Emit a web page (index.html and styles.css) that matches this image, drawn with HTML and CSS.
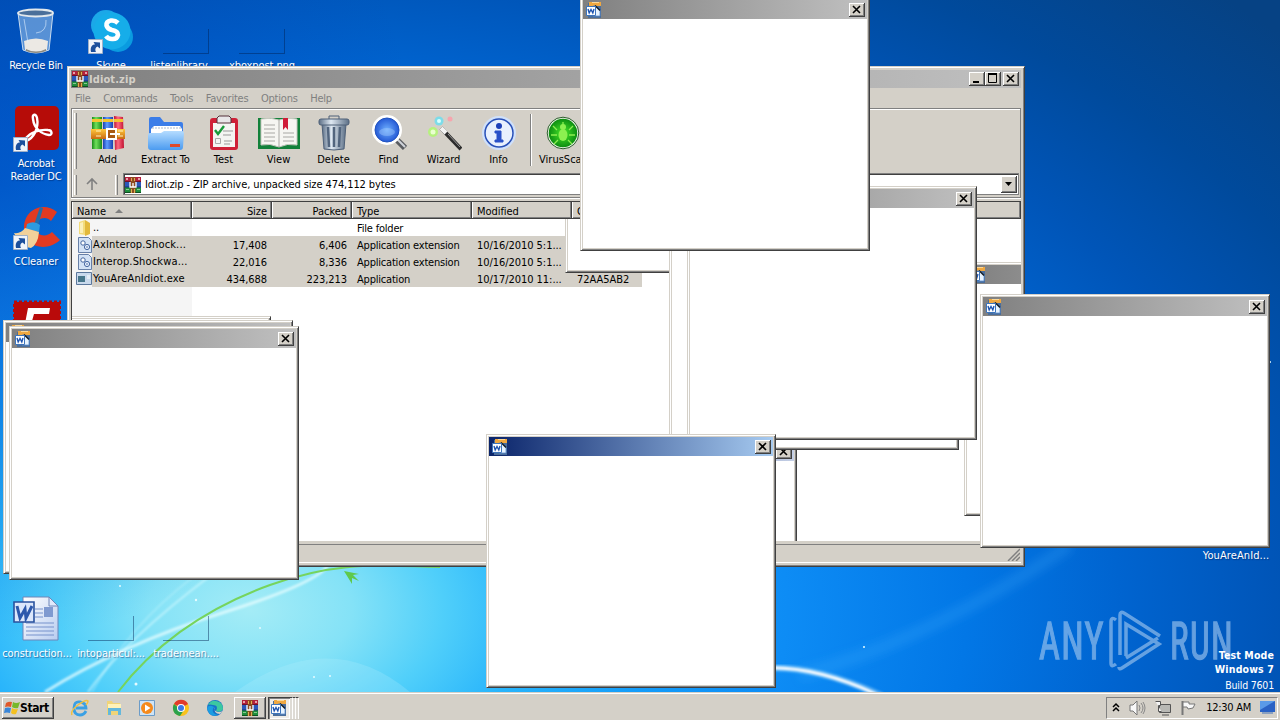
FILE: index.html
```html
<!DOCTYPE html>
<html lang="en">
<head>
  <meta charset="UTF-8">
  <meta name="viewport" content="width=device-width, initial-scale=1.0">
  <title>Desktop</title>
  <link rel="stylesheet" href="styles.css">
</head>
<body>
  <!-- Icon definitions -->
  <svg class="defs" width="0" height="0">
    <defs>
      <linearGradient id="gRed"><stop offset="0" stop-color="#c01030"/><stop offset=".4" stop-color="#ff6a80"/><stop offset="1" stop-color="#c01030"/></linearGradient>
      <linearGradient id="gGreen"><stop offset="0" stop-color="#1a8a1a"/><stop offset=".4" stop-color="#6fe05a"/><stop offset="1" stop-color="#1a8a1a"/></linearGradient>
      <linearGradient id="gBlue"><stop offset="0" stop-color="#1a3fb0"/><stop offset=".4" stop-color="#5d9cff"/><stop offset="1" stop-color="#1a3fb0"/></linearGradient>
      <linearGradient id="gGold" x2="0" y2="1"><stop offset="0" stop-color="#ffc93c"/><stop offset="1" stop-color="#c96a10"/></linearGradient>
      <linearGradient id="gFolder" x2="0" y2="1"><stop offset="0" stop-color="#b5dcff"/><stop offset="1" stop-color="#4b9bf0"/></linearGradient>
      <linearGradient id="gSteel"><stop offset="0" stop-color="#5c6f86"/><stop offset=".4" stop-color="#dfe9f3"/><stop offset="1" stop-color="#5c6f86"/></linearGradient>
      <radialGradient id="gLens"><stop offset="0" stop-color="#6fb0ff"/><stop offset="1" stop-color="#1c4fd0"/></radialGradient>
      <radialGradient id="gVirus"><stop offset="0" stop-color="#4ae82a"/><stop offset="1" stop-color="#0a8a10"/></radialGradient>
      <linearGradient id="gPage" x2="1" y2="1"><stop offset="0" stop-color="#fff"/><stop offset="1" stop-color="#b9cdf0"/></linearGradient>
    </defs>
    <symbol id="rar" viewBox="0 0 16 16">
      <path fill="#b3203c" d="M0 0h16v5H0z"/>
      <path fill="#2b56b8" d="M0 5h16v5H0z"/>
      <path fill="#1f8e3c" d="M0 10h16v6H0z"/>
      <path fill="#701028" d="M0 4h16v1H0z"/><path fill="#14307a" d="M0 9.500h16v1H0z"/><path fill="#0c5020" d="M0 15h16v1H0z"/>
      <path fill="#e8a0a8" d="M1 1h2v2H1zM13 1h2v2h-2z"/><path fill="#8ac890" d="M1 12h3v1H1zM12 12h3v1h-3z"/>
      <path fill="#8c4a20" d="M5.500 0h5v16h-5z"/>
      <path fill="#e0b050" d="M6 1h1v3H6zM9 1h1v3H9zM6 12h1v4H6zM9 12h1v4H9z"/>
      <path fill="none" stroke="#fff" stroke-width="1.300" d="M5 5v5h6V5M8 6v4"/>
    </symbol>
    <symbol id="word" viewBox="0 0 16 16">
      <path fill="#4a6e9c" d="M2 1h13v15H2z"/>
      <path fill="#f0a840" d="M3 0h12v4H3z"/>
      <path fill="#fbd898" d="M6 0h7v1H6z"/>
      <path fill="#e8f4ff" stroke="#5b8ecf" stroke-width=".8" d="M7 4h3l4 4v6H7z"/>
      <path fill="#101820" d="M9.500 3l5 5-1 1-5-5z"/>
      <path fill="#fff" stroke="#3d75bc" d="M.5 4.500h9v9h-9z"/>
      <path fill="none" stroke="#1f55b0" stroke-width="1.400" d="M2 7l1.200 4L5 7.500 6.800 11 8 7"/>
    </symbol>
    <symbol id="shortcut" viewBox="0 0 15 15">
      <path fill="#f0f4fa" stroke="#9fb0c8" d="M.5.5h14v14H.5z"/>
      <path fill="#1c4f9c" d="M3 13C2 8 4 5.500 7 5.500L5.500 3 12 3.500 12 9.500 9.500 7.500C7 8.500 7 11 8 13z"/>
    </symbol>
    <symbol id="close" viewBox="0 0 16 14">
      <path fill="none" stroke="#000" stroke-width="1.600" d="M4 3l7 7M11 3l-7 7"/>
    </symbol>
    <symbol id="dll" viewBox="0 0 14 16">
      <path fill="#d3e2f5" stroke="#6780a8" d="M.5.5h10l3 3v12H.5z"/>
      <circle cx="5" cy="6" r="2.200" fill="#fff" stroke="#43659f"/><circle cx="9" cy="10" r="2.600" fill="#e8f0fc" stroke="#43659f"/><circle cx="9" cy="10" r=".8" fill="#43659f"/>
    </symbol>
  </svg>

  <div class="desktop">
    <svg class="wallpaper" width="1280" height="692" viewBox="0 0 1280 692">
      <defs>
        <filter id="soft"><feGaussianBlur stdDeviation="1.200"/></filter>
        <filter id="softer"><feGaussianBlur stdDeviation="5"/></filter>
      </defs>
      <path d="M800 675Q930 640 1070 545" fill="none" stroke="#49b5ff" stroke-opacity=".22" stroke-width="12" filter="url(#softer)"/>
      <path d="M235 692Q330 625 410 692z" fill="#bdf3ff" fill-opacity=".22"/>
      <path d="M45 692Q120 645 225 612T330 560" fill="none" stroke="#e8fdff" stroke-opacity=".75" stroke-width="3" filter="url(#soft)"/>
      <path d="M88 692Q125 640 210 576" fill="none" stroke="#d8fbff" stroke-opacity=".6" stroke-width="2" filter="url(#soft)"/>
      <path d="M92 692Q130 625 192 578" fill="none" stroke="#d8fbff" stroke-opacity=".4" stroke-width="1.500" filter="url(#soft)"/>
      <path d="M118 692C150 650 200 610 270 585S380 566 440 567" fill="none" stroke="#76d45c" stroke-width="2"/>
      <path d="M344 571l15 3-6 1 6 6-7-3v6z" fill="#5fc94c"/>
      <path d="M765 668Q815 665 882 696" fill="none" stroke="#bfeaff" stroke-width="7" filter="url(#soft)" opacity=".4"/>
      <path d="M765 668Q815 666 876 694" fill="none" stroke="#fff" stroke-width="3" filter="url(#soft)"/>
      <g fill="#e6fbff"><circle cx="120" cy="586" r="1"/><circle cx="196" cy="600" r="1.200"/><circle cx="260" cy="628" r="1"/><circle cx="136" cy="684" r="1.500"/><circle cx="314" cy="677" r="1"/><circle cx="330" cy="676" r="1"/><circle cx="864" cy="647" r="1"/><circle cx="1270" cy="362" r="1"/></g>
    </svg>

    <!-- Desktop icons -->
    <div class="icon recycle">
      <svg width="44" height="48" viewBox="0 0 44 48">
        <path d="M4 6l5 37q13 6 26 0l4-37z" fill="#9fc4ea" fill-opacity=".55" stroke="#c9dcef"/>
        <path d="M10 34q12-5 24 0l-1 9q-11 5-22 0z" fill="#ece9e4"/>
        <path d="M12 42q10 5 20 0v2q-10 4-20 0z" fill="#8d8a80"/>
        <ellipse cx="21.500" cy="6" rx="17.500" ry="3.500" fill="#4a6f9a" stroke="#e2e8ec" stroke-width="1.800"/>
        <path d="M10 12l4 24M32 13q1 12-10 13" fill="none" stroke="#e4f2ff" stroke-opacity=".6"/>
      </svg>
      <span>Recycle Bin</span>
    </div>
    <div class="icon skype">
      <svg width="48" height="48" viewBox="0 0 48 48">
        <circle cx="19" cy="17" r="15" fill="#1ba8e8"/><circle cx="31" cy="29" r="15" fill="#0a9be0"/><circle cx="25" cy="23" r="18.500" fill="#16ade9"/>
        <path d="M31 15q-3-3-7-2.500-5 1-4.500 5 1 3.500 5.500 4.500 6 1 6 5-1 4.500-6 4-4 0-6-3" fill="none" stroke="#fff" stroke-width="4.600"/>
        <use href="#shortcut" x="1" y="31" width="15" height="15"/>
      </svg>
      <span>Skype</span>
    </div>
    <div class="icon listen"><i class="blank"></i><span>listenlibrary</span></div>
    <div class="icon xbox"><i class="blank"></i><span>xboxpost.png</span></div>
    <div class="icon acrobat">
      <svg width="48" height="48" viewBox="0 0 48 48">
        <rect x="3" y="1" width="44" height="44" rx="5" fill="#b60c08"/>
        <path d="M14 36c8-3 13-13 11-23-1-5-5-4-4 1 1 9 8 15 16 16 4 0 3-5-1-5-9-1-18 3-22 8-2 3-2 4 0 3z" fill="none" stroke="#fff" stroke-width="2.400"/>
        <use href="#shortcut" x="1" y="32" width="15" height="15"/>
      </svg>
      <span>Acrobat Reader DC</span>
    </div>
    <div class="icon ccleaner">
      <svg width="48" height="48" viewBox="0 0 48 48">
        <path d="M45 8C32-3 12 5 12 24s22 25 36 12l-8-8c-6 6-16 4-16-5s10-12 15-6z" fill="#e23a22"/>
        <path d="M28 3l3 1-5 18-4-1z" fill="#256da8"/><path d="M15 20q7-4 13 1l-1 7-13-3z" fill="#2d9be0"/>
        <path d="M13 24l14 4q-1 12-8 16Q8 43 2 29q7 1 11-5z" fill="#f2d19a"/>
        <use href="#shortcut" x="1" y="31" width="15" height="15"/>
      </svg>
      <span>CCleaner</span>
    </div>
    <div class="icon filezilla">
      <svg width="48" height="48" viewBox="0 0 48 48">
        <rect x="1" y="2" width="46" height="44" fill="#b90a0a" stroke="#b90a0a" stroke-width="3" stroke-dasharray="3 2"/>
        <path d="M15 8h22l-1 6H21l-2 7h12l-2 6H18l-3 12H9z" fill="#fff"/>
      </svg>
    </div>
    <div class="icon construction">
      <svg width="48" height="48" viewBox="0 0 48 48">
        <path d="M10 1h26l9 9v34H10z" fill="url(#gPage)" stroke="#6e86b8"/>
        <path d="M36 1v9h9z" fill="#dfe9fb" stroke="#6e86b8"/>
        <path d="M22 13h8M22 17h8M22 21h8M13 27h28M13 31h28M13 35h28M13 39h28" stroke="#7792cc"/>
        <path d="M31 11h9v10h-9z" fill="#7f9ad0"/>
        <path d="M1 6h20v20H1z" fill="#dce7fb" stroke="#28529e" stroke-width="1.600"/>
        <path d="M4 10l3 12 5-9 1 9 6-12" fill="none" stroke="#2c58ac" stroke-width="3"/>
      </svg>
      <span>construction...</span>
    </div>
    <div class="icon particular"><i class="blank"></i><span>intoparticul:...</span></div>
    <div class="icon trade"><i class="blank"></i><span>trademean....</span></div>
    <div class="icon idiot"><span>YouAreAnId...</span></div>

    <!-- Watermark -->
    <svg class="anyrun" width="200" height="66" viewBox="0 0 200 66">
      <text x="1" y="49" font-size="52" textLength="66" lengthAdjust="spacingAndGlyphs">ANY</text>
      <text x="132" y="49" font-size="52" textLength="64" lengthAdjust="spacingAndGlyphs">RUN</text>
      <path d="M78 10q-5-4-5 2v41q0 5 5 1M82 45V5q0-4 4-2l36 23M88 46V14l33 20-37 24q-3 2-3-1M88 48l32-20" fill="none" stroke-width="3.500"/>
    </svg>
    <div class="build"><b>Test Mode</b><b>Windows 7</b><span>Build 7601</span></div>

    <!-- WinRAR window -->
    <div class="window main">
      <div class="titlebar">
        <svg width="16" height="16"><use href="#rar"/></svg>
        <span class="caption">Idiot.zip</span>
        <div class="btn"><svg width="16" height="14"><path d="M4 9h6v2H4z"/></svg></div>
        <div class="btn"><svg width="16" height="14"><path d="M3.500 2v8.500h8V2z" fill="none" stroke="#000"/><path d="M3 1h9v2H3z"/></svg></div>
        <div class="btn last"><svg width="16" height="14"><use href="#close"/></svg></div>
      </div>
      <div class="menubar"><span>File</span><span>Commands</span><span>Tools</span><span>Favorites</span><span>Options</span><span>Help</span></div>
      <div class="rebar">
        <div class="toolbar">
          <i class="grip"></i>
          <div class="tool">
            <svg width="36" height="36" viewBox="0 0 36 36">
              <path fill="url(#gGreen)" d="M2 2h10v32H2z"/><path fill="url(#gBlue)" d="M13 2h10v32H13z"/><path fill="url(#gRed)" d="M24 1l9 1 1 31-9 2z"/>
              <path fill="#f4c430" d="M2 4h10v3H2zM13 4h10v3H13zM24 4h9v3h-9z"/>
              <path fill="url(#gGold)" d="M1 14h34v10H1z"/><path d="M6 16h5M6 21h5M28 16h5M28 21h5" stroke="#fff3c0"/>
              <path d="M17 14h9v10h-9z" fill="#a85a14" stroke="#fff" stroke-width="2"/><path d="M20 19h10" stroke="#fff" stroke-width="2"/>
            </svg>
            <span>Add</span>
          </div>
          <div class="tool wide">
            <svg width="36" height="36" viewBox="0 0 36 36">
              <path fill="#3b7de8" d="M1 4q0-2 2-2h9l4 5h17q2 0 2 2v14H1z"/>
              <path d="M3 14l3-3h26l2 3v6H3z" fill="#fff"/><path d="M4 13h30" stroke="#a9b9d0" stroke-dasharray="2 1"/>
              <path fill="url(#gFolder)" d="M0 20q0-2 2-2h11l3-2h18q2 0 2 2l-1 14q0 3-3 3H3q-3 0-3-3z"/>
              <path fill="#e04a2a" d="M22 29h10v3H22z"/>
            </svg>
            <span>Extract To</span>
          </div>
          <div class="tool">
            <svg width="36" height="36" viewBox="0 0 36 36">
              <rect x="4" y="3" width="28" height="32" rx="3" fill="#cf2038"/><path d="M7 8h22v24H7z" fill="#f4f4f2"/>
              <path d="M11 3l2-2h10l2 2v5H11z" fill="#e8e6e8" stroke="#55303a"/>
              <path d="M9 15l3 4 6-8" fill="none" stroke="#189a3a" stroke-width="2.400"/>
              <path d="M17 16h10M17 20h8M18 26h8M18 29h6" stroke="#999"/><path d="M9.500 23.500h5v5h-5z" fill="none" stroke="#aaa"/>
            </svg>
            <span>Test</span>
          </div>
          <div class="tool">
            <svg width="44" height="36" viewBox="0 0 44 36">
              <path fill="#12813a" d="M1 3h42v31H1z"/><path fill="#f6f6f2" stroke="#c8c8c0" d="M4 4q10-2 18 1 9-3 18-1v26q-10-2-18 2-9-4-18-2z"/>
              <path d="M22 5v27M7 10h11M7 14h11M7 18h11M7 22h11M7 26h11M26 18h11M26 22h11M26 26h11" stroke="#a8a8a4"/>
              <path fill="#d01c38" d="M26 3h5v12l-2.500-3-2.500 3z"/>
            </svg>
            <span>View</span>
          </div>
          <div class="tool">
            <svg width="36" height="36" viewBox="0 0 36 36">
              <path fill="url(#gSteel)" stroke="#4e6078" d="M6 9h24l-2 25q-10 2-20 0z"/>
              <path d="M12 12l1 20M18 12v20M24 12l-1 20" stroke="#52657e" stroke-width="2.500"/>
              <rect x="3" y="4" width="30" height="6" rx="2" fill="url(#gSteel)" stroke="#4e6078"/><path d="M13 4V1h10v3" fill="none" stroke="#4e6078"/>
            </svg>
            <span>Delete</span>
          </div>
          <div class="tool">
            <svg width="36" height="36" viewBox="0 0 36 36">
              <path d="M25 24l9 9" stroke="#5a5c60" stroke-width="6"/><path d="M25 23l9 9" stroke="#d0d4da" stroke-width="2"/>
              <circle cx="16" cy="15" r="13.500" fill="url(#gLens)" stroke="#fff" stroke-width="3"/><circle cx="16" cy="15" r="12" fill="none" stroke="#2254c0"/>
              <ellipse cx="16" cy="17" rx="8" ry="4" fill="#a9d0ff" opacity=".4"/>
            </svg>
            <span>Find</span>
          </div>
          <div class="tool">
            <svg width="36" height="36" viewBox="0 0 36 36">
              <path d="M15 13l20 21" stroke="#2c2c2c" stroke-width="4"/><path d="M15 13l5 5" stroke="#f2f2f2" stroke-width="4"/><path d="M22 19l12 13" stroke="#999"/>
              <circle cx="7" cy="17" r="5" fill="#aaff60" opacity=".7"/><circle cx="7" cy="17" r="2.500" fill="#eaffd0"/>
              <circle cx="13" cy="6" r="4.500" fill="#60e0f4" opacity=".75"/><circle cx="13" cy="6" r="2" fill="#d8ffff"/><circle cx="24" cy="4" r="2.500" fill="#ff9aa8" opacity=".8"/>
            </svg>
            <span>Wizard</span>
          </div>
          <div class="tool">
            <svg width="36" height="36" viewBox="0 0 36 36">
              <circle cx="18" cy="18" r="17" fill="#cfe0fa"/><circle cx="18" cy="18" r="14" fill="#e8f0fd" stroke="#2850b8" stroke-width="1.500"/>
              <circle cx="18" cy="11" r="3" fill="#1c3fb8"/><path d="M14 16h6v9h2v2h-8v-2h2v-7h-2z" fill="#2850c8" stroke="#2850c8"/>
            </svg>
            <span>Info</span>
          </div>
          <i class="sep"></i>
          <div class="tool">
            <svg width="36" height="36" viewBox="0 0 36 36">
              <circle cx="17" cy="18" r="15" fill="url(#gVirus)" stroke="#eaf5e6" stroke-width="1.500"/><circle cx="17" cy="18" r="15.800" fill="none" stroke="#2e5c2e"/>
              <ellipse cx="17" cy="20" rx="4.500" ry="6" fill="#8cf050"/><path d="M17 12V7M11 15l-4-4M23 15l4-4M11 20H5M23 20h6M12 25l-4 4M22 25l4 4" stroke="#8cf050" stroke-width="1.300"/><circle cx="17" cy="12" r="3" fill="#8cf050"/>
            </svg>
            <span>VirusScan</span>
          </div>
        </div>
        <div class="address">
          <i class="grip"></i>
          <svg class="up" width="14" height="14" viewBox="0 0 14 14"><path d="M7 13V3M2 7l5-5 5 5" fill="none" stroke="#808080" stroke-width="1.600"/></svg>
          <i class="grip second"></i>
          <div class="combo">
            <svg width="16" height="16"><use href="#rar"/></svg>
            <span>Idiot.zip - ZIP archive, unpacked size 474,112 bytes</span>
            <div class="drop"><svg width="15" height="15"><path d="M4 6h7l-3.500 4z"/></svg></div>
          </div>
        </div>
      </div>
      <div class="list">
        <div class="row header">
          <span>Name <svg class="arrow" width="8" height="4"><path d="M4 0l4 4H0z"/></svg></span><span class="num">Size</span><span class="num">Packed</span><span>Type</span><span>Modified</span><span>CRC32</span><span></span>
        </div>
        <div class="files">
          <div class="row">
            <span><svg width="14" height="16" viewBox="0 0 14 16"><path fill="#f3dc7c" d="M1 2l6-2v15l-6-1z"/><path fill="#e2b93c" d="M7 0l5 3v11l-5 2z"/><path fill="#fbf0ba" d="M2 3l3-1v11H2z"/></svg>..</span><span></span><span></span><span>File folder</span>
          </div>
          <div class="row selected">
            <span><svg width="14" height="16"><use href="#dll"/></svg><b>AxInterop.Shock...</b></span><span class="num">17,408</span><span class="num">6,406</span><span>Application extension</span><span>10/16/2010 5:1...</span><span></span>
          </div>
          <div class="row selected">
            <span><svg width="14" height="16"><use href="#dll"/></svg><b>Interop.Shockwa...</b></span><span class="num">22,016</span><span class="num">8,336</span><span>Application extension</span><span>10/16/2010 5:1...</span><span></span>
          </div>
          <div class="row selected">
            <span><svg width="16" height="14" viewBox="0 0 16 14"><path d="M.5.500h15v12H.5z" fill="#c9d9ec" stroke="#5b779c"/><path d="M2 4h7v6H2z" fill="#47768a"/><path d="M11 4h3M11 6h3" stroke="#fff"/></svg><b>YouAreAnIdiot.exe</b></span><span class="num">434,688</span><span class="num">223,213</span><span>Application</span><span>10/17/2010 11:...</span><span>72AA5AB2</span>
          </div>
          <!-- Popups painted over the list only -->
          <div class="window popup p-edge"></div>
          <div class="window popup p-upper"></div>
          <div class="window popup p-lower">
            <div class="titlebar faded"><svg width="16" height="16"><use href="#word"/></svg><div class="btn last"><svg width="16" height="14"><use href="#close"/></svg></div></div>
          </div>
          <div class="window popup p-right">
            <div class="titlebar"><svg width="16" height="16"><use href="#word"/></svg></div>
          </div>
          <div class="window popup p-middle"></div>
        </div>
      </div>
      <div class="statusbar">
        <svg width="13" height="13"><path d="M1 13L13 1M5 13l8-8M9 13l4-4" stroke="#808080" stroke-width="1.500"/></svg>
      </div>
    </div>

    <!-- Popup windows -->
    <div class="window popup w1"><div class="titlebar"><svg width="16" height="16"><use href="#word"/></svg><div class="btn last"><svg width="16" height="14"><use href="#close"/></svg></div></div></div>
    <div class="window popup w2"><div class="titlebar"><svg width="16" height="16"><use href="#word"/></svg><div class="btn last"><svg width="16" height="14"><use href="#close"/></svg></div></div></div>
    <div class="window popup w3"><div class="titlebar"><svg width="16" height="16"><use href="#word"/></svg><div class="btn last"><svg width="16" height="14"><use href="#close"/></svg></div></div></div>
    <div class="window popup w4"><div class="titlebar"><svg width="16" height="16"><use href="#word"/></svg><div class="btn last"><svg width="16" height="14"><use href="#close"/></svg></div></div></div>
    <div class="window popup w5"><div class="titlebar"><svg width="16" height="16"><use href="#word"/></svg><div class="btn last"><svg width="16" height="14"><use href="#close"/></svg></div></div></div>
    <div class="window popup w6"><div class="titlebar active"><svg width="16" height="16"><use href="#word"/></svg><div class="btn last"><svg width="16" height="14"><use href="#close"/></svg></div></div></div>
  </div>

  <!-- Taskbar -->
  <div class="taskbar">
    <div class="start">
      <svg width="16" height="16" viewBox="0 0 16 16"><path d="M2 3q3-2 6-1L7 7Q4 6 1 7z" fill="#e0582a"/><path d="M9 2q3 2 7 0l-2 6q-3 1-6-1z" fill="#76b82c"/><path d="M1 8q3-1 6 0l-1 5q-3-1-6 0z" fill="#3a86d8"/><path d="M8 8q3 2 6 1l-2 5q-3 1-5-1z" fill="#f4c020"/></svg>
      <span>Start</span>
    </div>
    <div class="quick">
      <svg width="18" height="18" viewBox="0 0 18 18"><path d="M15 12q-2 4-6 4-6 0-6-7t6-6 6 6H5" fill="none" stroke="#3aa0e4" stroke-width="2.800"/><path d="M1 16Q-1 12 7 6t10-4q0 2-2 4" fill="none" stroke="#f0c040" stroke-width="1.500"/></svg>
      <svg width="18" height="18" viewBox="0 0 18 18"><path d="M2 2h5l1 2h7v12H2z" fill="#f0d478"/><path d="M3 5h13v4H3z" fill="#fff2b8"/><path d="M3 9h13v7h-3v-4H6v4H3z" fill="#64b8dc"/></svg>
      <svg width="18" height="18" viewBox="0 0 18 18"><path d="M1.500 1.500h15v15h-15z" fill="#cfe4f6" stroke="#6c9cc8"/><circle cx="9" cy="9" r="6" fill="#f58a1c"/><path d="M7 5.500l5.500 3.500L7 12.500z" fill="#fff"/></svg>
      <svg width="18" height="18" viewBox="0 0 18 18"><circle cx="9" cy="9" r="8" fill="#f9c21c"/><path d="M9 9L2 5a8 8 0 0 1 14 0z" fill="#e03a2c"/><path d="M2 5a8 8 0 0 0 6 12l4-6-4-1z" fill="#2ba24c"/><circle cx="9" cy="9" r="4" fill="#fff"/><circle cx="9" cy="9" r="3" fill="#3b78e7"/></svg>
      <svg width="18" height="18" viewBox="0 0 18 18"><circle cx="9" cy="9" r="8" fill="#1672c8"/><path d="M2 6a8 8 0 0 1 15 4q-2 4-7 2 3-6-3-6-3-1-5 0z" fill="#3cc8a0"/><path d="M8 8q-4 6 4 8-9 3-11-7 2-4 7-1z" fill="#1b9de2"/><path d="M9 8q-2 4 3 5 3 0 5-1l-3 3q-7 0-5-7z" fill="#d4d0c8"/></svg>
    </div>
    <div class="task"><svg width="16" height="16"><use href="#rar"/></svg></div>
    <div class="task pressed"><svg width="16" height="16"><use href="#word"/></svg></div>
    <i class="sliver"></i><i class="sliver"></i><i class="sliver"></i>
    <div class="tray">
      <svg width="8" height="12" viewBox="0 0 8 12"><path d="M1 5l3-3 3 3M1 9l3-3 3 3" fill="none" stroke="#000" stroke-width="1.500"/></svg>
      <svg width="17" height="16" viewBox="0 0 17 16"><path d="M1 5h3l4-4v14l-4-4H1z" fill="#f8f8f8" stroke="#777"/><path d="M10 5q2 3 0 6M12 3q4 5 0 10M14 2q4 6 0 12" fill="none" stroke="#888"/></svg>
      <svg width="16" height="16" viewBox="0 0 16 16"><path d="M4.500 4.500h11v8h-11zM7 15h7" fill="#b8b8b4" stroke="#555"/><path d="M.5 1.500h5v4h-2v6h3" fill="#f4f4f4" stroke="#555"/></svg>
      <svg width="17" height="16" viewBox="0 0 17 16"><path d="M2.500 1v14" stroke="#777" stroke-width="2"/><path d="M3 2h6v2h6l-2 4-5 1-1-2H3z" fill="#f8f8f8" stroke="#777"/></svg>
      <span>12:30 AM</span>
      <svg width="15" height="13" viewBox="0 0 15 13"><path d="M0 0h15v11H0z" fill="#2a62c4"/><path d="M0 0h15L0 9z" fill="#5a9ae8"/><path d="M2 11h11v2H2z" fill="#8aa0c0"/></svg>
    </div>
  </div>
</body>
</html>
```
FILE: styles.css
```css
* { box-sizing: border-box; }
body { margin: 0; width: 1280px; height: 720px; overflow: hidden; display: flex; flex-direction: column; font-family: "DejaVu Sans Condensed", "DejaVu Sans", sans-serif; font-stretch: condensed; font-size: 11px; color: #000; }
b { font-weight: normal; }
svg { display: block; flex: none; }
.defs { position: absolute; }

/* Desktop */
.desktop { position: relative; height: 692px; overflow: hidden; background:
  radial-gradient(ellipse 420px 460px at 0 180px, rgba(0, 60, 175, 0.5), rgba(0, 80, 200, 0)),
  radial-gradient(ellipse 1280px 800px at 250px 610px, #a4ecf6 0, #84e2f7 8%, #50cffa 15%, #28b4fb 22%, #149cf9 32%, #0d8cf5 42%, #0277e6 56%, #0064d0 68%, #0055b8 80%, #004a9c 93%, #064284 108%); }
.wallpaper { position: absolute; left: 0; top: 0; }
.icon { position: absolute; width: 74px; display: flex; flex-direction: column; align-items: center; color: #fff; text-align: center; line-height: 13px; letter-spacing: -0.1px; text-shadow: 1px 1px 1px rgba(0, 30, 90, 0.5); }
.icon span { white-space: nowrap; }
.blank { width: 46px; height: 25px; border-right: 1px solid rgba(0, 30, 80, 0.45); border-bottom: 1px solid rgba(0, 30, 80, 0.45); }
.recycle { left: -1px; top: 7px; letter-spacing: -0.3px; }
.recycle svg { margin-bottom: 4px; }
.skype { left: 74px; top: 8px; }
.skype svg { margin-bottom: 3px; }
.listen { left: 149px; top: 29px; }
.listen span { margin-right: 14px; }
.xbox { left: 225px; top: 29px; }
.listen span, .xbox span { margin-top: 5px; }
.acrobat { left: -1px; top: 105px; letter-spacing: -0.2px; }
.acrobat svg { margin-bottom: 4px; }
.acrobat span { width: 60px; white-space: normal; }
.ccleaner { left: -1px; top: 204px; }
.ccleaner svg { margin-bottom: 3px; }
.filezilla { left: 0; top: 300px; }
.construction { left: 0; top: 596px; }
.construction svg { margin-bottom: 3px; }
.particular { left: 74px; top: 616px; }
.trade { left: 149px; top: 616px; }
.particular span, .trade span { margin-top: 6px; }
.idiot { left: 1199px; top: 549px; letter-spacing: 0.1px; }
.anyrun { position: absolute; left: 1038px; top: 610px; font-family: Roboto, sans-serif; letter-spacing: 2px; fill: #9cc4ee; stroke: #9cc4ee; stroke-width: 1.3px; opacity: 0.65; }
.anyrun path { fill: none; }
.build { position: absolute; right: 6px; top: 648px; display: flex; flex-direction: column; align-items: flex-end; color: #fff; font-size: 10.5px; line-height: 14px; letter-spacing: 0.15px; }
.build b { font-weight: bold; }
.build span { margin-top: 2px; letter-spacing: -0.2px; }

/* Windows */
.window { position: absolute; background: #d4d0c8; border: 1px solid; border-color: #d4d0c8 #404040 #404040 #d4d0c8; box-shadow: inset 1px 1px #fff, inset -1px -1px #808080; }
.titlebar { height: 18px; padding: 0 2px 0 1px; display: flex; align-items: center; background: linear-gradient(90deg, #808080, #c0c0c0); }
.titlebar .caption { margin-left: 1px; flex: 1; color: #d4d0c8; font-weight: bold; font-size: 11px; letter-spacing: 0.1px; }
.btn { width: 16px; height: 14px; background: #d4d0c8; box-shadow: inset -1px -1px #404040, inset 1px 1px #fff, inset -2px -2px #808080; }
.last { margin-left: 2px; }

.main { left: 67px; top: 66px; width: 958px; height: 501px; padding: 3px; display: flex; flex-direction: column; }
.menubar { height: 20px; flex: none; padding-left: 4px; display: flex; align-items: center; gap: 12.6px; color: #808080; letter-spacing: -0.22px; }
.rebar { height: 90px; flex: none; border: 1px solid #808080; box-shadow: inset 1px 1px #fff, 0 1px #fff; }
.toolbar { height: 64px; display: flex; padding-left: 2px; }
.grip { width: 3px; height: 56px; margin-top: 4px; border-left: 1px solid #fff; border-right: 1px solid #808080; flex: none; }
.tool { width: 55px; display: flex; flex-direction: column; align-items: center; padding-top: 6px; }
.tool span { margin-top: 2px; line-height: 13px; }
.tool:nth-child(2) { margin-left: 3px; }
.tool.wide { width: 61px; }
.sep { width: 2px; height: 52px; margin: 5px 4px 0 4px; border-left: 1px solid #808080; border-right: 1px solid #fff; }
.address { height: 24px; display: flex; padding: 0 1px 1px 2px; }
.address .grip { height: 20px; margin-top: 2px; }
.up { margin: 4px 0 0 8px; }
.address .second { margin: 2px 5px 0 16px; }
.combo { flex: 1; height: 22px; background: #fff; border: 1px solid #808080; box-shadow: inset 1px 1px #404040; display: flex; align-items: center; padding: 2px 1px 1px; }
.combo span { flex: 1; margin-left: 4px; letter-spacing: -0.09px; }
.drop { width: 16px; height: 17px; background: #d4d0c8; box-shadow: inset -1px -1px #404040, inset 1px 1px #fff, inset -2px -2px #808080; }
.list { margin-top: 3px; height: 340px; border-top: 1px solid #404040; border-left: 1px solid #404040; background: #fff; }
.row { display: grid; grid-template-columns: 120px 80px 80px 120px 100px 70px 1fr; height: 17px; line-height: 19px; letter-spacing: -0.05px; }
.row span { height: 17px; padding: 0 5px; white-space: nowrap; }
.row .num { text-align: right; }
.header { background: #d4d0c8; }
.header span { box-shadow: inset -1px -1px #404040, inset 1px 0 #fff, inset -2px -2px #808080; }
.arrow { display: inline-block; margin: 0 0 2px 6px; fill: #808080; }
.files { position: relative; height: 322px; overflow: hidden; background: linear-gradient(90deg, #f5f5f5 120px, #fff 120px); }
.files .row span:nth-child(4) { letter-spacing: -0.2px; }
.files .row span:first-child { display: flex; align-items: center; padding: 0; padding-left: 6px; }
.files .row span:first-child svg { margin-right: 1px; }
.files .row:nth-child(4) span:first-child { padding-left: 4px; }
.files b { flex: 1; letter-spacing: 0.15px; }
.selected { width: 570px; background: linear-gradient(90deg, transparent 20px, #d4d0c8 20px); }
.statusbar { flex: 1; margin-top: 3px; border-top: 1px solid #808080; border-bottom: 1px solid #fff; display: flex; justify-content: flex-end; align-items: flex-end; padding: 1px; }

.popup { width: 290px; height: 254px; padding: 2px; background: linear-gradient(#fff, #fff) content-box, #d4d0c8; }
.popup .titlebar { height: 19px; padding: 0 2px 0 3px; justify-content: space-between; }
.popup .active { background: linear-gradient(90deg, #0a246a, #a6caf0); }
.popup .faded { background: linear-gradient(90deg, #0a246a, #c4cfe6); }
.p-edge { left: -91px; top: 97px; }
.p-upper { left: 493px; top: -200px; }
.p-middle { left: 597px; top: -23px; }
.p-lower { left: 435px; top: 220px; }
.p-right { left: 892px; top: 43px; }
.w1 { left: 687px; top: 186px; }
.w2 { left: 580px; top: -3px; }
.w3 { left: 980px; top: 294px; }
.w4 { left: 3px; top: 320px; }
.w5 { left: 9px; top: 326px; }
.w6 { left: 486px; top: 434px; }

/* Taskbar */
.taskbar { height: 28px; background: #d4d0c8; border-top: 1px solid #d4d0c8; box-shadow: inset 0 1px #fff; display: flex; align-items: center; padding: 3px 2px 1px; }
.start, .task { height: 22px; display: flex; align-items: center; box-shadow: inset -1px -1px #404040, inset 1px 1px #fff, inset -2px -2px #808080; }
.start { width: 52px; padding-left: 2px; font-weight: bold; font-size: 12px; letter-spacing: -0.4px; }
.quick { display: flex; gap: 15.7px; margin: 0 10px 0 17px; }
.task { width: 32px; justify-content: center; margin-right: 2px; }
.pressed { width: 22px; margin-right: 0; background: #eeece8; box-shadow: inset 1px 1px #404040, inset 2px 2px #808080, inset -1px -1px #fff; }
.sliver { width: 3px; height: 22px; border-top: 1px solid #404040; border-right: 1px solid #fff; background: #dedbd5; }
.tray { margin-left: auto; width: 172px; height: 22px; border: 1px solid; border-color: #808080 #fff #fff #808080; display: flex; align-items: center; padding: 0 2px 0 5px; justify-content: space-between; letter-spacing: -0.3px; }
```
